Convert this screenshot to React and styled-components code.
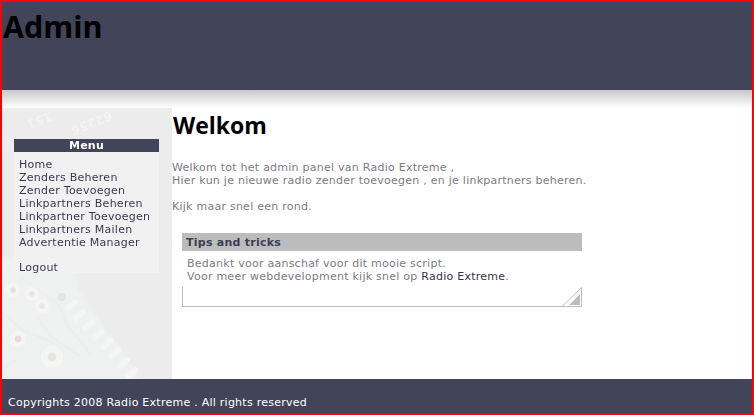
import styled, { createGlobalStyle } from "styled-components";

const GlobalStyle = createGlobalStyle`
  html, body {
    margin: 0;
    padding: 0;
    background: #fff;
  }
`;

const Page = styled.div`
  width: 754px;
  height: 415px;
  box-sizing: border-box;
  border: 2px solid #ff0000;
  display: flex;
  flex-direction: column;
  background: #fff;
  overflow: hidden;
  font-family: "DejaVu Sans", Verdana, sans-serif;
  font-size: 11px;
  line-height: 13px;
  letter-spacing: 0.25px;
  color: #7b7b84;
`;

const Header = styled.header`
  height: 88px;
  flex: none;
  background: #424459;
`;

const Title = styled.h1`
  margin: 0 0 0 1px;
  font-size: 30.5px;
  line-height: 48px;
  font-weight: 700;
  letter-spacing: 0;
  color: #000;
  font-family: "Open Sans", sans-serif;
`;

const Shade = styled.div`
  height: 18px;
  flex: none;
  background: linear-gradient(#c8c8c8, #fff);
`;

const Middle = styled.div`
  flex: 1;
  display: flex;
  min-height: 0;
`;

const Sidebar = styled.aside`
  position: relative;
  width: 170px;
  flex: none;
  box-sizing: border-box;
  padding: 31px 13px 0 12px;
  background: #ececec;
  overflow: hidden;
`;

const Circuit = styled.svg`
  position: absolute;
  left: 0;
  top: 0;
  width: 170px;
  height: 271px;
`;

const MenuBox = styled.nav`
  position: relative;
  background: #f1f1f1;
`;

const MenuHeading = styled.div`
  height: 13px;
  background: #424459;
  color: #fff;
  font-weight: 700;
  text-align: center;
  line-height: 13px;
`;

const MenuList = styled.div`
  display: flex;
  flex-direction: column;
  padding: 6px 5px 0;
  height: 121px;
  box-sizing: border-box;
`;

const MenuLink = styled.a`
  color: #3a3a52;
  height: 13px;
  margin-top: ${(p) => (p.$gap ? "12px" : "0")};
`;

const Main = styled.main`
  flex: 1;
`;

const Heading = styled.h2`
  margin: 0 0 0 1px;
  font-size: 23px;
  line-height: 35px;
  font-weight: 700;
  letter-spacing: 0;
  color: #000;
  font-family: "Open Sans", sans-serif;
`;

const Paragraph = styled.p`
  margin: 0;
  padding-top: 18px;
`;

const TipBox = styled.section`
  position: relative;
  width: 400px;
  margin: 20px 0 0 10px;
`;

const TipTitle = styled.div`
  height: 18px;
  background: #bcbcbc;
  color: #3c3e55;
  font-weight: 700;
  line-height: 19px;
  padding-left: 4px;
`;

const TipBody = styled.div`
  padding: 6px 5px 0;
  height: 30px;
`;

const TipLink = styled.a`
  color: #33334a;
`;

const TipFrame = styled.div`
  position: relative;
  height: 20px;
  box-sizing: border-box;
  border-left: 1px solid #bdbdbd;
  border-bottom: 1px solid #bdbdbd;
`;

const Corner = styled.svg`
  position: absolute;
  right: 0;
  bottom: -1px;
  width: 20px;
  height: 20px;
`;

const Footer = styled.footer`
  height: 34px;
  flex: none;
  box-sizing: border-box;
  background: #424459;
  color: #fff;
  padding: 17px 0 0 6px;
`;

const links = [
  "Home",
  "Zenders Beheren",
  "Zender Toevoegen",
  "Linkpartners Beheren",
  "Linkpartner Toevoegen",
  "Linkpartners Mailen",
  "Advertentie Manager",
];

const pins = [
  [70, 197],
  [78, 207],
  [87, 217],
  [97, 227],
  [105, 236],
  [113, 245],
  [122, 255],
  [130, 265],
];

const pads = [
  [11, 182, 7, "#e6e2df"],
  [30, 186, 7, "#e7e5e3"],
  [40, 198, 7, "#e6e5e2"],
  [16, 231, 8, "#e8dbd9"],
  [50, 249, 11, "#e8e3e0"],
];

function App() {
  return (
    <>
      <GlobalStyle />
      <Page>
        <Header>
          <Title>Admin</Title>
        </Header>
        <Shade />
        <Middle>
          <Sidebar>
            <Circuit viewBox="0 0 170 271" fill="none">
              <defs>
                <filter id="soft">
                  <feGaussianBlur stdDeviation="1.5" />
                </filter>
                <filter id="softer">
                  <feGaussianBlur stdDeviation="0.7" />
                </filter>
              </defs>
              <path d="M-5 150H72L76 182L142 276H-5Z" fill="#eff1f1" filter="url(#soft)" />
              <g filter="url(#softer)">
                <g stroke="#e8eeee" strokeWidth="1.5">
                  <path d="M0 205l22 18 26 10 14 18M0 262l16-12M20 170l36 26 10 22 24 30M34 208l16 22 28 18" />
                </g>
                <g stroke="#f5f5f5" strokeWidth="6" strokeLinecap="round">
                  {pins.map(([x, y]) => (
                    <path key={x} d={`M${x + 3} ${y - 3}L${x - 4} ${y + 3}`} />
                  ))}
                </g>
                {pads.map(([x, y, r, fill]) => (
                  <g key={x}>
                    <circle cx={x} cy={y} r={r} fill="#f5f5f3" />
                    <circle cx={x} cy={y} r={r * 0.4} fill={fill} />
                  </g>
                ))}
                <circle cx="60" cy="189" r="4" fill="#e4e4e4" />
                <g fill="#f3f3f3" fontFamily="DejaVu Sans, sans-serif" fontSize="12" fontWeight="700">
                  <text transform="translate(48 4) rotate(160)">151</text>
                  <text transform="translate(108 3) rotate(158)">62256</text>
                </g>
              </g>
            </Circuit>
            <MenuBox>
              <MenuHeading>Menu</MenuHeading>
              <MenuList>
                {links.map((link) => (
                  <MenuLink key={link}>{link}</MenuLink>
                ))}
                <MenuLink $gap>Logout</MenuLink>
              </MenuList>
            </MenuBox>
          </Sidebar>
          <Main>
            <Heading>Welkom</Heading>
            <Paragraph>
              Welkom tot het admin panel van Radio Extreme ,
              <br />
              Hier kun je nieuwe radio zender toevoegen , en je linkpartners beheren.
              <br />
              <br />
              Kijk maar snel een rond.
            </Paragraph>
            <TipBox>
              <TipTitle>Tips and tricks</TipTitle>
              <TipBody>
                Bedankt voor aanschaf voor dit mooie script.
                <br />
                Voor meer webdevelopment kijk snel op <TipLink>Radio Extreme</TipLink>.
              </TipBody>
              <TipFrame>
                <Corner viewBox="0 0 20 20" fill="none">
                  <path d="M0 19.5L19.5 0.5V19.5" stroke="#bdbdbd" />
                  <path d="M7 18L18 7V18Z" fill="#bdbdbd" />
                </Corner>
              </TipFrame>
            </TipBox>
          </Main>
        </Middle>
        <Footer>Copyrights 2008 Radio Extreme . All rights reserved</Footer>
      </Page>
    </>
  );
}

export default App;
